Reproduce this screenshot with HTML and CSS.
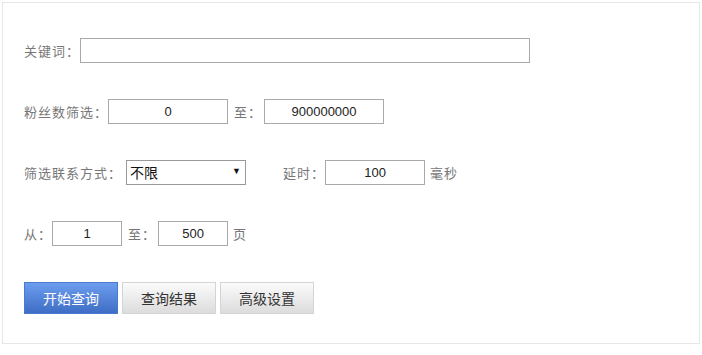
FILE: index.html
```html
<!DOCTYPE html>
<html lang="zh-CN">
  <head>
    <title>搜索</title>
    <meta charset="UTF-8" />
    <meta name="viewport" content="width=device-width" />
    <link rel="stylesheet" href="styles.css">
  </head>
  <body>
    <form class="panel">
      <div class="row">
        <label for="keyword">关键词：</label>
        <input type="text" id="keyword" class="field wide" />
      </div>
      <div class="row">
        <label for="fansMin">粉丝数筛选：</label>
        <input type="text" id="fansMin" class="field mid" value="0" />
        <span class="sep">至：</span>
        <input type="text" id="fansMax" class="field mid" value="900000000" />
      </div>
      <div class="row">
        <label for="contact">筛选联系方式：</label>
        <div class="select-wrap">
          <select id="contact" class="select">
            <option>不限</option>
            <option>手机</option>
            <option>邮箱</option>
          </select>
          <span class="arrow">▼</span>
        </div>
        <label for="delay" class="delay-label">延时：</label>
        <input type="text" id="delay" class="field delay" value="100" />
        <span class="unit">毫秒</span>
      </div>
      <div class="row">
        <label for="pageFrom">从：</label>
        <input type="text" id="pageFrom" class="field small" value="1" />
        <span class="sep">至：</span>
        <input type="text" id="pageTo" class="field small" value="500" />
        <span class="unit">页</span>
      </div>
      <div class="buttons">
        <button type="button" class="btn primary">开始查询</button>
        <button type="button" class="btn">查询结果</button>
        <button type="button" class="btn">高级设置</button>
      </div>
    </form>
  </body>
</html>
```
FILE: styles.css
```css
/* Reset */
* {
  margin: 0;
  padding: 0;
  box-sizing: border-box;
  font-family: "Liberation Sans", "Noto Sans CJK SC", sans-serif;
}

body {
  background: #fff;
  padding: 2px;
  font-size: 13px;
  color: #666;
}

/* Outer panel */
.panel {
  width: 698px;
  height: 342px;
  border: 1px solid #e6e6e6;
  padding: 35px 21px 0;
}

/* Form rows */
.row {
  display: flex;
  align-items: center;
  height: 25px;
  margin-bottom: 36px;
}

.row label,
.sep,
.unit {
  color: #777;
  white-space: nowrap;
  letter-spacing: 1px;
}

.sep {
  margin: 0 2px 0 6px;
}

.unit {
  margin-left: 5px;
}

/* Inputs */
.field {
  height: 25px;
  border: 1px solid #a9a9a9;
  font-size: 13px;
  color: #222;
  text-align: center;
  outline: none;
}

.wide {
  width: 450px;
}

.mid {
  width: 120px;
}

.small {
  width: 70px;
}

.delay {
  width: 100px;
}

.delay-label {
  margin-left: 37px;
}

/* Select */
.select-wrap {
  position: relative;
  width: 120px;
  height: 25px;
  margin-left: 4px;
}

.select {
  appearance: none;
  -webkit-appearance: none;
  width: 120px;
  height: 25px;
  border: 1px solid #999;
  background: #fff;
  padding-left: 3px;
  font-size: 14px;
  color: #111;
  outline: none;
}

.arrow {
  position: absolute;
  right: 5px;
  top: 6px;
  font-size: 9px;
  color: #111;
  pointer-events: none;
}

/* Buttons */
.buttons {
  display: flex;
  gap: 4px;
}

.btn {
  width: 94px;
  height: 32px;
  border: 1px solid #d4d4d4;
  background: linear-gradient(#fbfbfb, #dcdcdc);
  font-size: 14px;
  color: #333;
  cursor: pointer;
}

.btn.primary {
  border: 1px solid #4a79d0;
  background: linear-gradient(#6c9ded, #3f6dc6);
  color: #fff;
}
```
